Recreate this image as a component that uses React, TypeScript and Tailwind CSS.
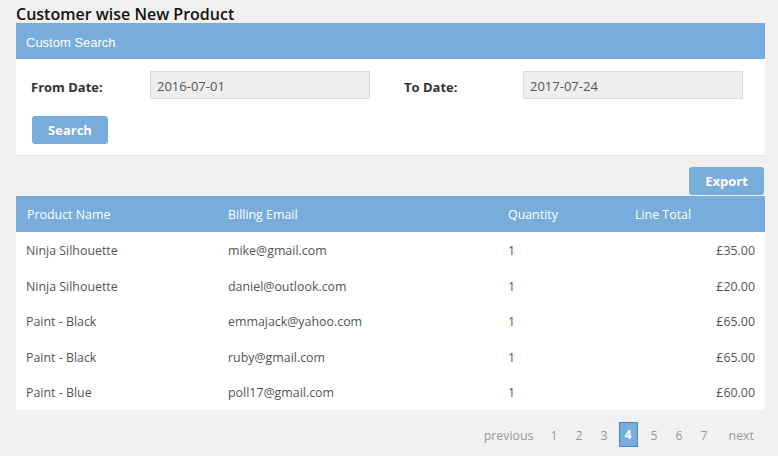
const rows = [
  { name: "Ninja Silhouette", email: "mike@gmail.com", qty: 1, total: "£35.00" },
  { name: "Ninja Silhouette", email: "daniel@outlook.com", qty: 1, total: "£20.00" },
  { name: "Paint - Black", email: "emmajack@yahoo.com", qty: 1, total: "£65.00" },
  { name: "Paint - Black", email: "ruby@gmail.com", qty: 1, total: "£65.00" },
  { name: "Paint - Blue", email: "poll17@gmail.com", qty: 1, total: "£60.00" },
];

const pages = ["1", "2", "3", "4", "5", "6", "7"];

export default function App() {
  return (
    <div className="w-[778px] h-[456px] overflow-hidden bg-[#f1f1f1] font-['Open_Sans',sans-serif] text-[#555]">
      <h1 className="pl-4 pt-[4px] h-[23px] text-[16px] leading-[20px] font-semibold text-[#111]">
        Customer wise New Product
      </h1>

      <div className="ml-4 w-[749px] bg-white border-b border-[#e3e3e3]">
        <div className="h-[36px] bg-[#77acdb] flex items-center px-[10px] pt-[3px] text-[13px] text-white font-['Liberation_Sans',sans-serif]">
          Custom Search
        </div>
        <div className="pt-3 pb-[11px] pl-[15px]">
          <div className="flex items-center h-[28px]">
            <label className="w-[119px] text-[13px] font-bold text-[#333] pt-[5px]">From Date:</label>
            <input
              readOnly
              value="2016-07-01"
              className="w-[220px] h-[28px] bg-[#eeeeee] border border-[#dcdcdc] px-[6px] pt-[2px] text-[13px] text-[#555] outline-none"
            />
            <label className="ml-[34px] w-[119px] text-[13px] font-bold text-[#333] pt-[5px]">To Date:</label>
            <input
              readOnly
              value="2017-07-24"
              className="w-[220px] h-[28px] bg-[#eeeeee] border border-[#dcdcdc] px-[6px] pt-[2px] text-[13px] text-[#555] outline-none"
            />
          </div>
          <button className="mt-[17px] ml-[1px] w-[76px] h-[28px] rounded-[3px] bg-[#77acdb] text-white text-[13px] font-bold pt-[1px]">
            Search
          </button>
        </div>
      </div>

      <div className="ml-4 w-[749px] flex justify-end pt-[11px] pr-[1px]">
        <button className="w-[75px] h-[28px] rounded-[3px] bg-[#77acdb] text-white text-[13px] font-bold pt-[1px]">
          Export
        </button>
      </div>

      <table className="ml-4 mt-[1px] w-[749px] table-fixed bg-white text-[12.4px] border-collapse">
        <thead>
          <tr className="h-[36px] bg-[#77acdb] text-white text-left">
            <th className="font-normal pl-[11px] pt-[3px] w-[212px]">Product Name</th>
            <th className="font-normal pt-[3px] w-[280px]">Billing Email</th>
            <th className="font-normal pt-[3px] w-[127px]">Quantity</th>
            <th className="font-normal pt-[3px]">Line Total</th>
          </tr>
        </thead>
        <tbody>
          {rows.map((r, i) => (
            <tr key={i} className="h-[35.6px]">
              <td className="pl-[10px] pt-[3px]">{r.name}</td>
              <td className="pt-[3px]">{r.email}</td>
              <td className="pt-[3px]">{r.qty}</td>
              <td className="text-right pr-[10px] pt-[3px]">{r.total}</td>
            </tr>
          ))}
        </tbody>
      </table>

      <div className="ml-4 w-[749px] flex justify-end items-center pt-3 pr-[11px] text-[12.4px] text-[#999]">
        <span className="mr-[14px] pt-[3px]">previous</span>
        {pages.map((p) =>
          p === "4" ? (
            <span
              key={p}
              className="w-[19px] h-[25px] flex items-center justify-center bg-[#77acdb] border border-[#4a86bd] text-white font-bold mr-[10px] -ml-[4px] pt-[2px]"
            >
              {p}
            </span>
          ) : (
            <span key={p} className="w-[13px] mr-[12px] text-center pt-[3px]">
              {p}
            </span>
          )
        )}
        <span className="ml-[6px] pt-[3px]">next</span>
      </div>
    </div>
  );
}
